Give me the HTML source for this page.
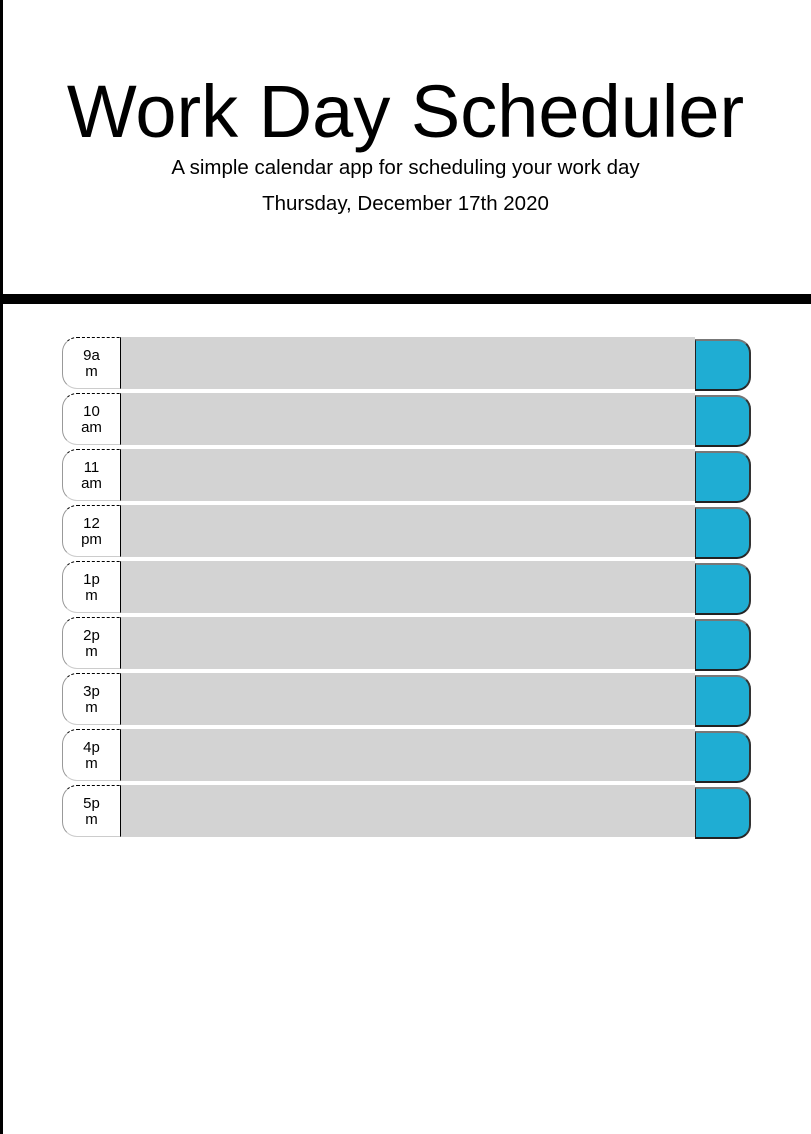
<!DOCTYPE html>
<html><head><meta charset="utf-8"><style>
html,body{margin:0;padding:0;background:#fff;}
body{width:811px;height:1134px;position:relative;overflow:hidden;font-family:"Liberation Sans",sans-serif;}
.lb{position:absolute;left:0;top:0;width:3px;height:1134px;background:#000;}
.hb{position:absolute;left:0;top:294px;width:811px;height:10px;background:#000;}
h1{position:absolute;top:70px;left:0;width:811px;margin:0;text-align:center;font-weight:normal;font-size:74px;line-height:84px;color:#000;}
.sub{position:absolute;top:156px;left:0;width:811px;text-align:center;font-size:20.5px;line-height:24px;}
.date{position:absolute;top:192px;left:0;width:811px;text-align:center;font-size:20.5px;line-height:24px;}
.row{position:absolute;left:62px;height:52px;width:690px;}
.hr{position:absolute;left:0;top:0;width:59px;border-top:1px dashed #000;border-left:1px solid #999;border-right:1px solid #000;border-bottom:1px solid #ccc;border-radius:15px 0 0 15px;text-align:center;font-size:15px;line-height:16px;box-sizing:border-box;height:52px;padding-top:10px;}
.ta{position:absolute;left:59px;top:0;width:574px;height:52px;background:#d3d3d3;}
.bt{position:absolute;left:633px;top:2px;width:56px;height:52px;box-sizing:border-box;background:#1fadd3;border-radius:0 14px 14px 0;border-top:2px solid #777;border-right:2px solid #333;border-bottom:2px solid #222;border-left:1px solid #222;}
</style></head><body>
<div class="lb"></div>
<h1>Work Day Scheduler</h1>
<div class="sub">A simple calendar app for scheduling your work day</div>
<div class="date">Thursday, December 17th 2020</div>
<div class="hb"></div>
<div class="row" style="top:337px"><div class="hr">9a<br>m</div><div class="ta"></div><div class="bt"></div></div>
<div class="row" style="top:393px"><div class="hr">10<br>am</div><div class="ta"></div><div class="bt"></div></div>
<div class="row" style="top:449px"><div class="hr">11<br>am</div><div class="ta"></div><div class="bt"></div></div>
<div class="row" style="top:505px"><div class="hr">12<br>pm</div><div class="ta"></div><div class="bt"></div></div>
<div class="row" style="top:561px"><div class="hr">1p<br>m</div><div class="ta"></div><div class="bt"></div></div>
<div class="row" style="top:617px"><div class="hr">2p<br>m</div><div class="ta"></div><div class="bt"></div></div>
<div class="row" style="top:673px"><div class="hr">3p<br>m</div><div class="ta"></div><div class="bt"></div></div>
<div class="row" style="top:729px"><div class="hr">4p<br>m</div><div class="ta"></div><div class="bt"></div></div>
<div class="row" style="top:785px"><div class="hr">5p<br>m</div><div class="ta"></div><div class="bt"></div></div>
</body></html>
